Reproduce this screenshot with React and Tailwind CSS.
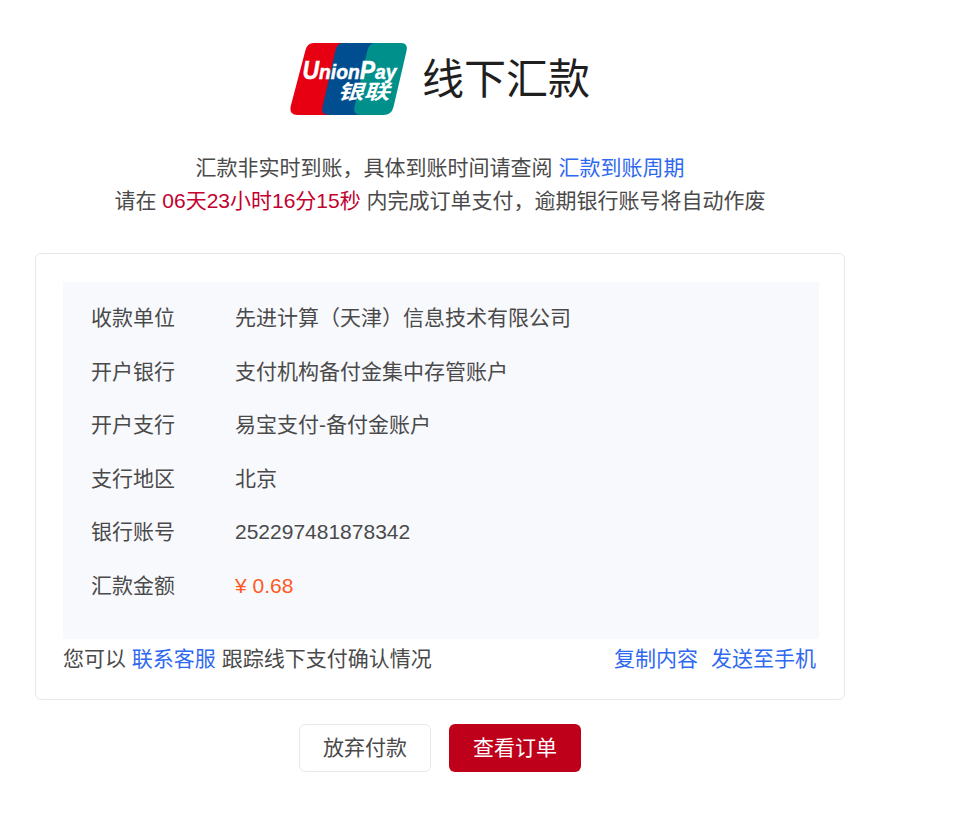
const font = { fontFamily: '"Liberation Sans", "Noto Sans CJK SC", sans-serif' };

const rows = [
  ["收款单位", "先进计算（天津）信息技术有限公司"],
  ["开户银行", "支付机构备付金集中存管账户"],
  ["开户支行", "易宝支付-备付金账户"],
  ["支行地区", "北京"],
  ["银行账号", "252297481878342"],
];

function UnionPayLogo() {
  return (
    <svg width="118" height="74" viewBox="-1.5 0 118 74" className="shrink-0">
      <path d="M23 0H62Q70 0 68 8L55 64Q53 72 45 72H7Q-1 72 0 64L15 7Q17 0 23 0Z" fill="#e60012" />
      <path d="M52 0H92Q100 0 98 8L85 64Q83 72 75 72H39Q30 72 32 64L45 7Q47 0 52 0Z" fill="#004e8f" />
      <path d="M84 0H110Q118 0 116 8L103 64Q101 72 93 72H71Q62 72 64 64L77 7Q79 0 84 0Z" fill="#00908c" />
      <text x="12" y="36" fill="#fff" stroke="#fff" strokeWidth="0.5" fontFamily="Liberation Sans" fontSize="21" fontWeight="700" fontStyle="italic" textLength="94" lengthAdjust="spacingAndGlyphs">
        <tspan fontSize="25">U</tspan>nion<tspan fontSize="25">P</tspan>ay
      </text>
      <text x="47" y="56" fill="#fff" fontFamily="Noto Sans CJK SC" fontSize="20" fontWeight="700" fontStyle="italic" textLength="52" lengthAdjust="spacingAndGlyphs">
        银联
      </text>
    </svg>
  );
}

export default function App() {
  return (
    <div className="w-[880px] bg-white px-[35px] pt-[43px] pb-[43px] text-[#4a4a4a]" style={font}>
      <div className="flex items-center justify-center pr-[1px]">
        <UnionPayLogo />
        <h1 className="ml-[15px] text-[42px] leading-[74px] text-[#1f1f1f]">线下汇款</h1>
      </div>

      <div className="mt-[34px] text-center text-[21px] leading-[33px]">
        <p>
          汇款非实时到账，具体到账时间请查阅 <a className="text-[#2f69f0]">汇款到账周期</a>
        </p>
        <p>
          请在 <span className="text-[#c3002f]">06天23小时16分15秒</span> 内完成订单支付，逾期银行账号将自动作废
        </p>
      </div>

      <div className="mt-[36px] h-[447px] rounded-[6px] border border-[#e8e8e8] pl-[27px] pr-[25px] pt-[28px]">
        <div className="h-[357px] bg-[#f8f9fd] px-[28px] pt-[9px] text-[21px]">
          {rows.map(([label, value]) => (
            <div key={label} className="flex h-[53.5px] items-center">
              <span className="w-[144px]">{label}</span>
              <span>{value}</span>
            </div>
          ))}
          <div className="flex h-[53.5px] items-center">
            <span className="w-[144px]">汇款金额</span>
            <span className="text-[#ff5a1f]">¥ 0.68</span>
          </div>
        </div>
        <div className="mt-[5px] flex items-center justify-between pr-[3px] text-[21px] leading-[30px]">
          <p>
            您可以 <a className="text-[#2f69f0]">联系客服</a> 跟踪线下支付确认情况
          </p>
          <div className="flex gap-[13px] text-[#2f69f0]">
            <a>复制内容</a>
            <a>发送至手机</a>
          </div>
        </div>
      </div>

      <div className="mt-[24px] flex justify-center gap-[18px]">
        <button className="h-[48px] w-[132px] rounded-[6px] border border-[#e8e8e8] bg-white text-[21px] text-[#4a4a4a]">
          放弃付款
        </button>
        <button className="h-[48px] w-[132px] rounded-[6px] bg-[#bf001b] text-[21px] text-white">
          查看订单
        </button>
      </div>
    </div>
  );
}
